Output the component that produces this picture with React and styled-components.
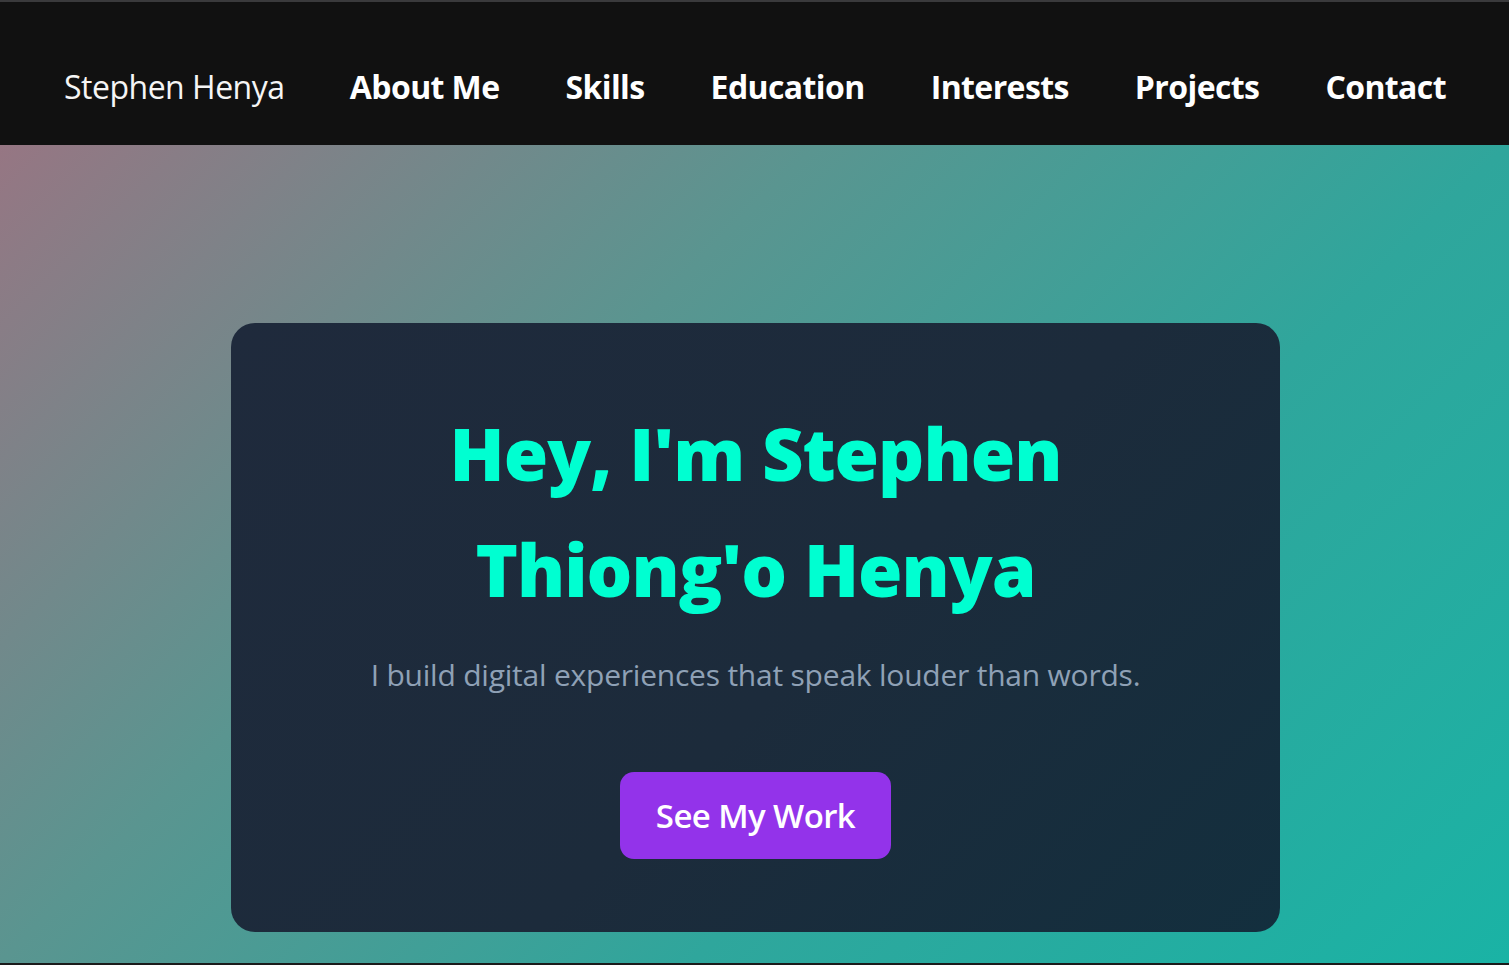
import React from "react";
import styled, { createGlobalStyle } from "styled-components";

const Global = createGlobalStyle`
  html, body { margin: 0; padding: 0; background: #111111; }
  body { font-family: "Open Sans", "Noto Sans", sans-serif; }
  * { box-sizing: border-box; }
`;

const Frame = styled.div`
  height: 965px;
  overflow: hidden;
  border-top: 2px solid #3a3a3c;
  border-bottom: 2px solid #1b1b1b;
  display: flex;
  flex-direction: column;
`;

const Nav = styled.nav`
  flex: 0 0 143px;
  background: #111111;
  display: flex;
  align-items: center;
  justify-content: space-between;
  padding: 26px 63px 0 64px;
`;

const Logo = styled.div`
  color: #f5f5f5;
  font-size: 32px;
  font-weight: 400;
  line-height: 1.36;
  letter-spacing: -0.5px;
`;

const Links = styled.ul`
  display: flex;
  gap: 66px;
  list-style: none;
  margin: 0;
  padding: 0;
`;

const LinkItem = styled.li`
  color: #ffffff;
  font-size: 32px;
  font-weight: 700;
  line-height: 1.36;
  letter-spacing: -0.6px;
`;

const Hero = styled.section`
  flex: 0 0 965px;
  display: flex;
  align-items: center;
  justify-content: center;
  padding-left: 2px;
  background: linear-gradient(
    135deg,
    #967683 0%,
    #5a9590 33%,
    #2fa69c 61%,
    #1ab3a5 94%,
    #17b5a6 100%
  );
`;

const Card = styled.div`
  width: 1049px;
  padding: 73px 40px;
  border-radius: 24px;
  background: linear-gradient(135deg, #1f2a3c 0%, #1c2b3b 55%, #132f3e 100%);
  display: flex;
  flex-direction: column;
  align-items: center;
  text-align: center;
`;

const Title = styled.h1`
  margin: 0;
  color: #00ffd1;
  font-size: 72px;
  font-weight: 800;
  line-height: 1.6;
  letter-spacing: -1px;
  max-width: 700px;
`;

const Subtitle = styled.p`
  margin: 25px 0 0;
  color: #8fa1b6;
  font-size: 30px;
  font-weight: 400;
  line-height: 1.5;
  letter-spacing: -0.22px;
`;

const Button = styled.button`
  margin-top: 75px;
  height: 87px;
  padding: 0 36px;
  border: none;
  border-radius: 14px;
  background: #9333ea;
  color: #ffffff;
  font-family: inherit;
  font-size: 33px;
  font-weight: 600;
  letter-spacing: -0.6px;
  cursor: pointer;
`;

const links = ["About Me", "Skills", "Education", "Interests", "Projects", "Contact"];

export default function App() {
  return (
    <>
      <Global />
      <Frame>
        <Nav>
          <Logo>Stephen Henya</Logo>
          <Links>
            {links.map((l) => (
              <LinkItem key={l}>{l}</LinkItem>
            ))}
          </Links>
        </Nav>
        <Hero>
          <Card>
            <Title>Hey, I'm Stephen Thiong'o Henya</Title>
            <Subtitle>I build digital experiences that speak louder than words.</Subtitle>
            <Button>See My Work</Button>
          </Card>
        </Hero>
      </Frame>
    </>
  );
}
